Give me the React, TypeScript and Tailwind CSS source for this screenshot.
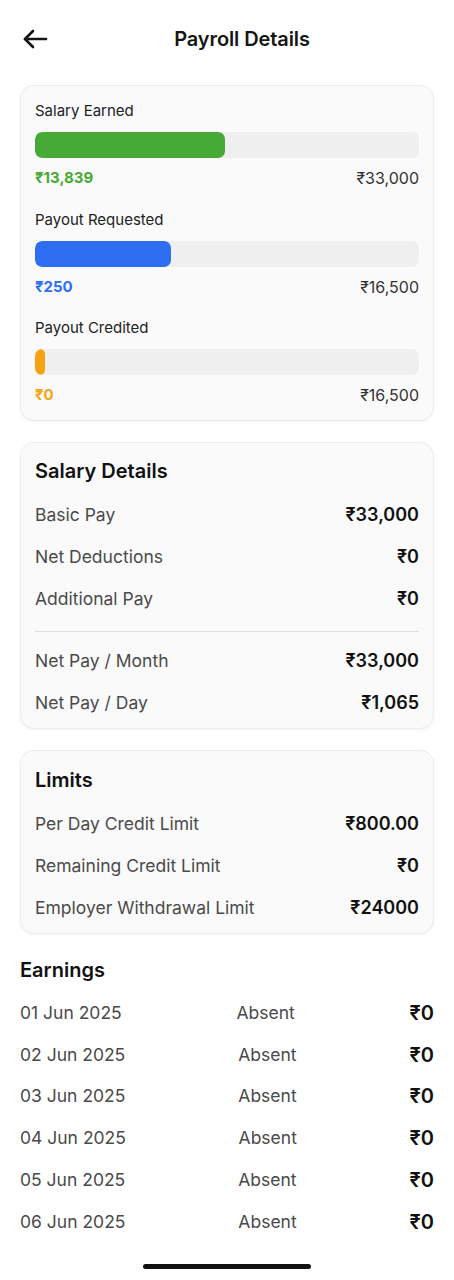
import React from "react"

const font = { fontFamily: "Inter, 'Noto Sans', 'DejaVu Sans', sans-serif" }

const progress = [
  { label: "Salary Earned", value: "₹13,839", total: "₹33,000", pct: 49.6, bar: "bg-[#47a936]", text: "text-[#47a936]" },
  { label: "Payout Requested", value: "₹250", total: "₹16,500", pct: 35.5, bar: "bg-[#2d6ef2]", text: "text-[#2d6ef2]" },
  { label: "Payout Credited", value: "₹0", total: "₹16,500", pct: 2.6, bar: "bg-[#f6a312]", text: "text-[#f6a312]" },
]

const earnings = ["01", "02", "03", "04", "05", "06"]

const Row = ({ label, value }: { label: string; value: string }) => (
  <div className="flex items-center justify-between py-[9px] leading-6">
    <span className="text-[17.5px] text-[#4a4a4a]">{label}</span>
    <span className="text-[18px] font-semibold text-[#111]">{value}</span>
  </div>
)

export default function App() {
  return (
    <div className="w-[454px] min-h-[1280px] bg-white flex flex-col" style={font}>
      {/* Header */}
      <div className="relative h-[78px] flex items-center justify-center pl-[30px]">
        <button className="absolute left-[22px] top-[29px]" aria-label="Back">
          <svg width="26" height="20" viewBox="0 0 26 20" fill="none" stroke="#141414" strokeWidth="2.6" strokeLinecap="round" strokeLinejoin="round">
            <path d="M24 10H3" />
            <path d="M11 2L3 10l8 8" />
          </svg>
        </button>
        <h1 className="text-[20px] font-semibold text-[#151515] tracking-[-0.1px]">Payroll Details</h1>
      </div>

      <div className="px-5 pt-[7px] flex flex-col">
        {/* Progress card */}
        <div className="rounded-[14px] border border-[#ececec] bg-[#fafafa] shadow-[0_1px_3px_rgba(0,0,0,0.05)] px-[14px] pt-[14px] pb-[14px] flex flex-col gap-[19.5px]">
          {progress.map((p) => (
            <div key={p.label} className="flex flex-col">
              <span className="text-[15px] leading-[22px] text-[#222]">{p.label}</span>
              <div className="mt-[10px] h-[26px] rounded-[7px] bg-[#efefef] overflow-hidden">
                <div className={`h-full rounded-[7px] ${p.bar}`} style={{ width: `${p.pct}%` }} />
              </div>
              <div className="mt-[9px] flex items-center justify-between leading-[22px]">
                <span className={`text-[15px] font-bold ${p.text}`}>{p.value}</span>
                <span className="text-[16px] text-[#333]">{p.total}</span>
              </div>
            </div>
          ))}
        </div>

        {/* Salary details */}
        <div className="mt-[21px] rounded-[14px] border border-[#ececec] bg-[#fafafa] shadow-[0_1px_3px_rgba(0,0,0,0.05)] px-[14px] pt-[15px] pb-[4px]">
          <h2 className="text-[20px] leading-[26px] font-semibold text-[#111] mb-[10px]">Salary Details</h2>
          <Row label="Basic Pay" value="₹33,000" />
          <Row label="Net Deductions" value="₹0" />
          <Row label="Additional Pay" value="₹0" />
          <div className="mt-[11px] mb-[8px] h-px bg-[#dddddd]" />
          <Row label="Net Pay / Month" value="₹33,000" />
          <Row label="Net Pay / Day" value="₹1,065" />
        </div>

        {/* Limits */}
        <div className="mt-[21px] rounded-[14px] border border-[#ececec] bg-[#fafafa] shadow-[0_1px_3px_rgba(0,0,0,0.05)] px-[14px] pt-[16px] pb-[4px]">
          <h2 className="text-[20px] leading-[26px] font-semibold text-[#111] mb-[10px]">Limits</h2>
          <Row label="Per Day Credit Limit" value="₹800.00" />
          <Row label="Remaining Credit Limit" value="₹0" />
          <Row label="Employer Withdrawal Limit" value="₹24000" />
        </div>

        {/* Earnings */}
        <h2 className="mt-[23px] text-[20px] leading-[26px] font-semibold text-[#111] mb-[9px]">Earnings</h2>
        {earnings.map((d) => (
          <div key={d} className="flex items-center justify-between h-[41.8px]">
            <span className="text-[17.5px] text-[#4a4a4a]">{d} Jun 2025</span>
            <span className="text-[17.5px] text-[#4a4a4a]">Absent</span>
            <span className="text-[20px] font-semibold text-[#111]">₹0</span>
          </div>
        ))}
      </div>

      {/* Home indicator */}
      <div className="mt-[21px] mx-auto w-[168px] h-[5px] rounded-full bg-[#111]" />
    </div>
  )
}
